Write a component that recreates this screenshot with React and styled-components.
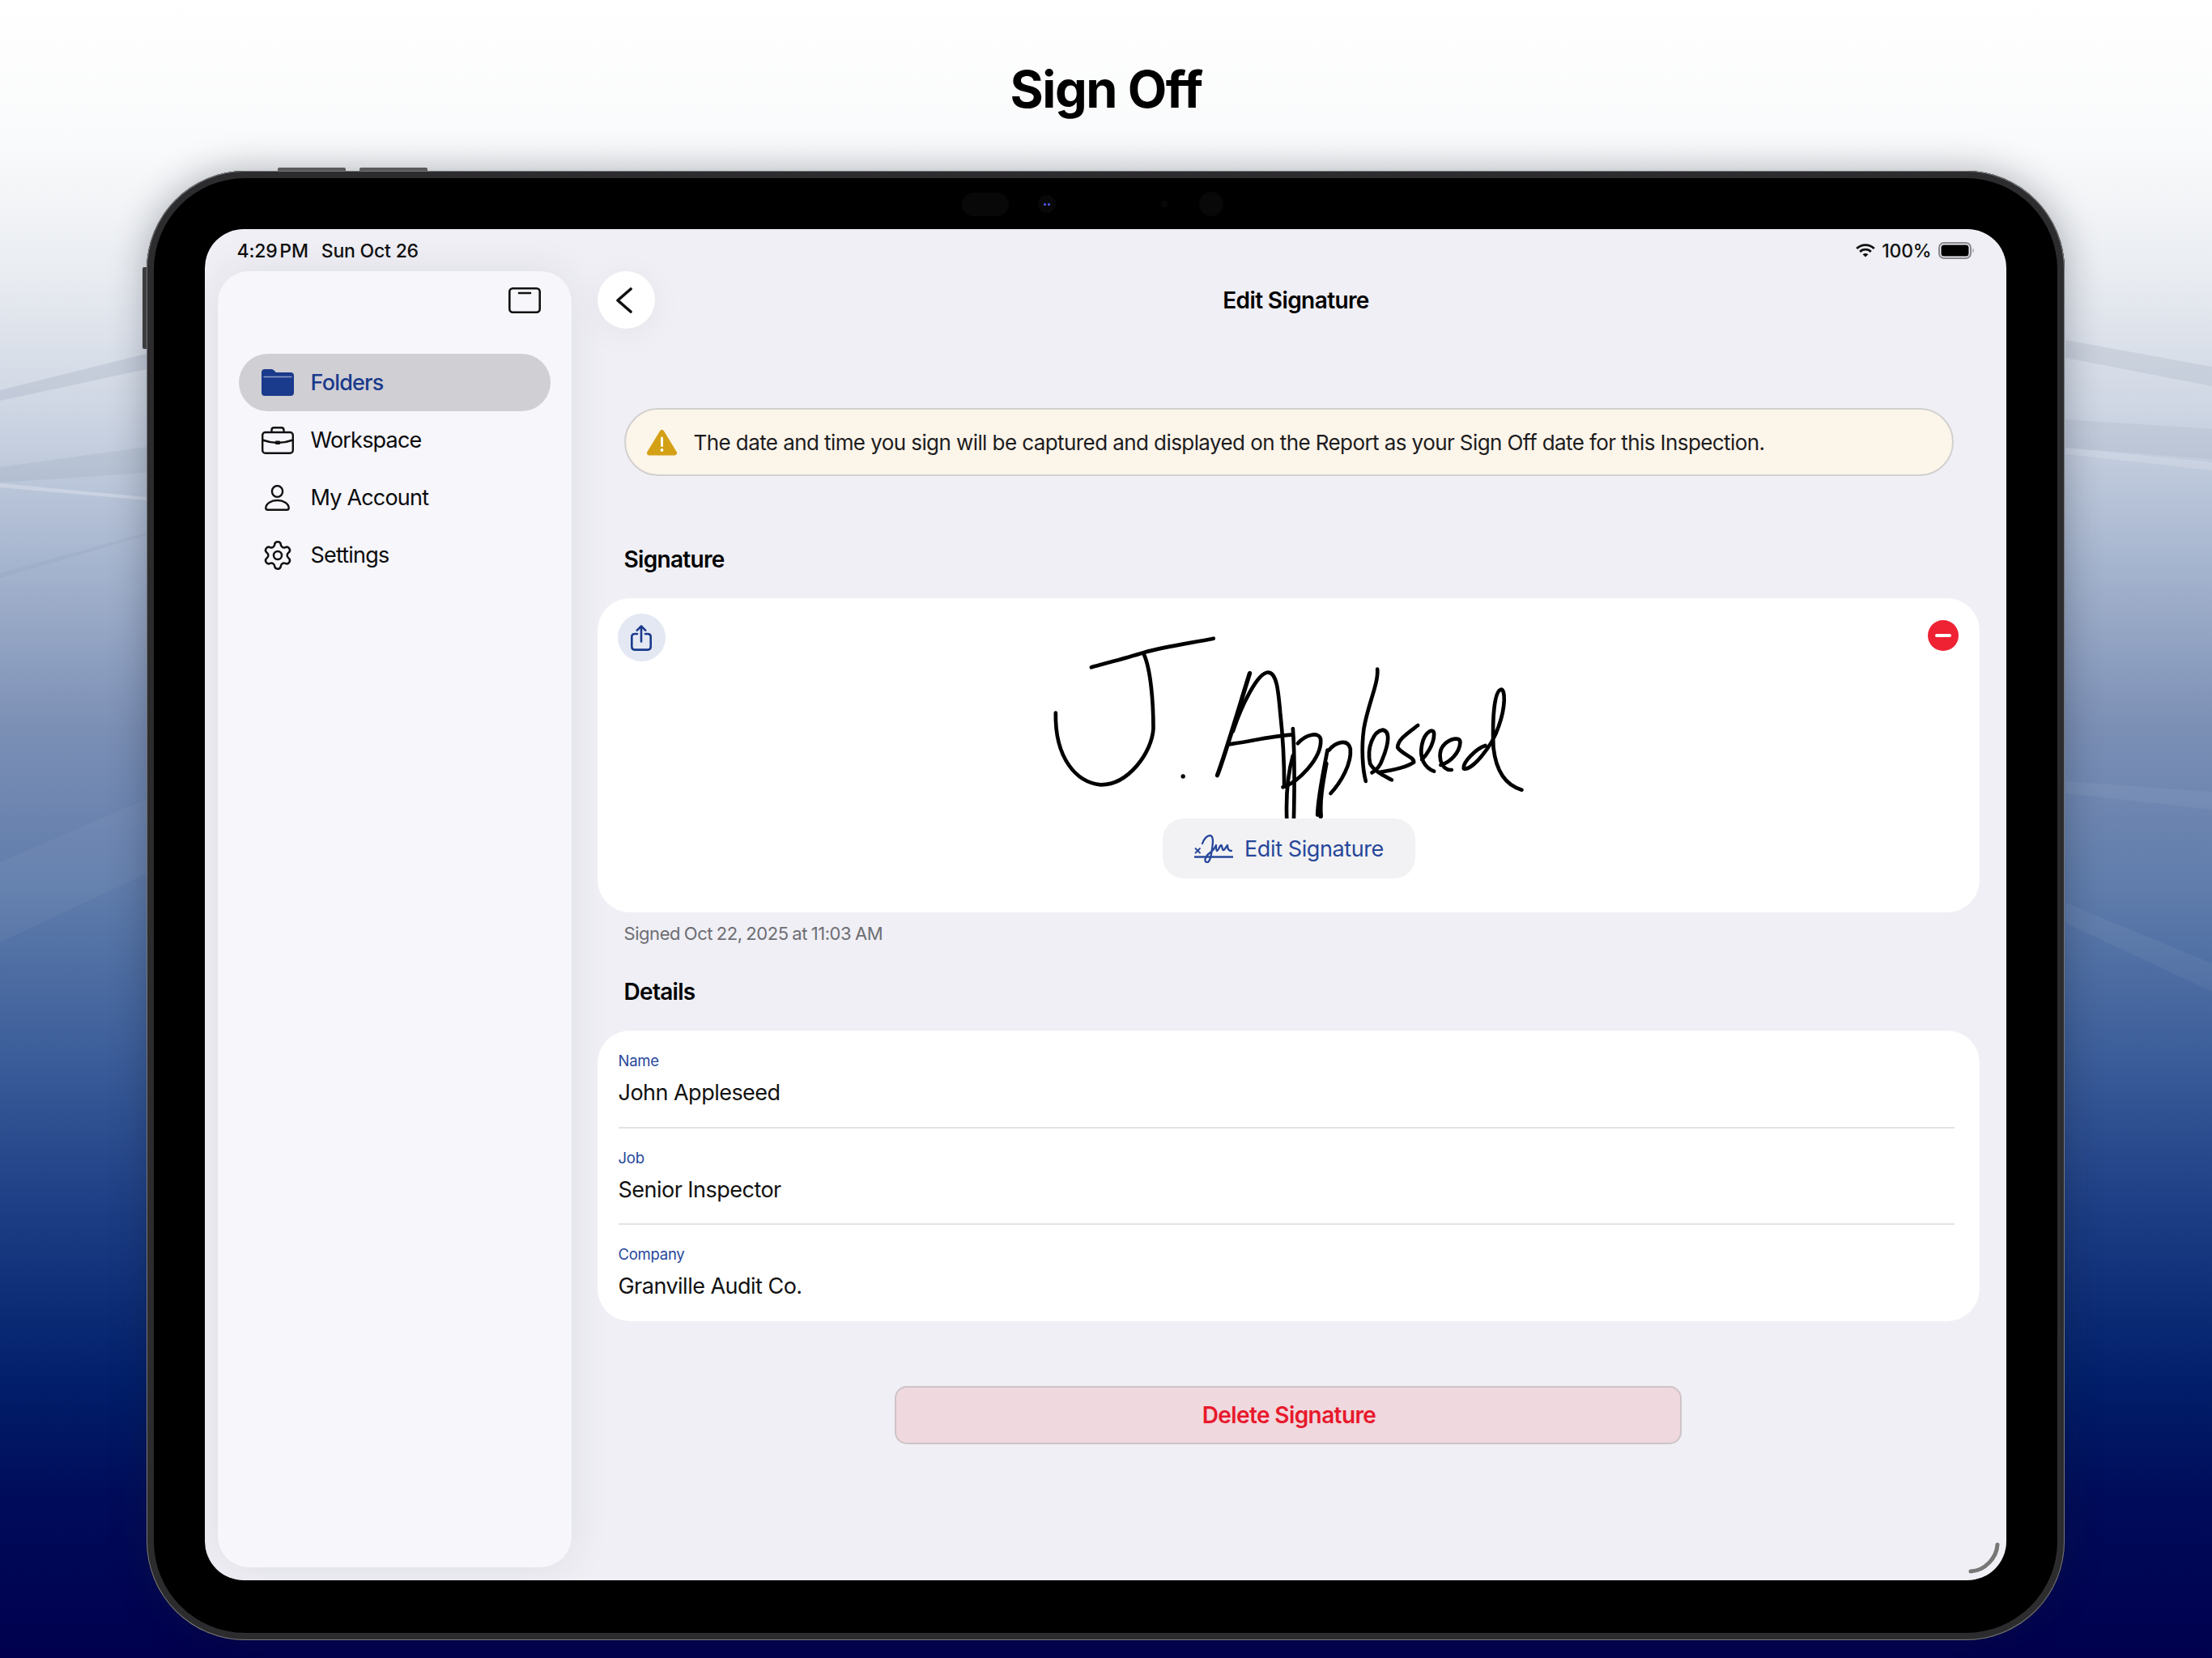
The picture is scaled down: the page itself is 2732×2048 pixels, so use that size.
import styled, { createGlobalStyle } from 'styled-components';
import { Settings } from 'lucide-react';

const navy = '#1a3a8c';

const GlobalStyle = createGlobalStyle`
  html, body {
    margin: 0;
    padding: 0;
    background: #fff;
    font-family: Inter, 'Noto Sans', sans-serif;
    color: #000;
  }
  * { box-sizing: border-box; }
`;

const Page = styled.div`
  position: relative;
  width: 2732px;
  height: 2048px;
  overflow: hidden;
  display: flex;
  flex-direction: column;
  align-items: center;
  background: linear-gradient(
    180deg,
    #ffffff 0,
    #f9fafb 180px,
    #e9ecf1 340px,
    #cfd7e4 500px,
    #a5b4ce 700px,
    #7b8fb5 900px,
    #5f7cab 1100px,
    #3c5e9a 1300px,
    #1c3d84 1500px,
    #02206c 1700px,
    #000c5a 1850px,
    #00004e 2048px
  );
`;

const Backdrop = styled.svg`
  position: absolute;
  inset: 0;
`;

const PageTitle = styled.h1`
  position: relative;
  margin: 75px 0 66px;
  font-size: 63px;
  line-height: 70px;
  font-weight: 700;
  letter-spacing: -1.4px;
`;

const Device = styled.div`
  position: relative;
  width: 2369px;
  height: 1815px;
  margin-right: 2px;
  padding: 72px 72px 74px;
  border-radius: 122px;
  background: #000;
  box-shadow:
    inset 0 0 0 1px #77777a,
    inset 0 0 0 9px #2c2c2e,
    0 0 46px rgba(20, 25, 40, 0.32);
`;

const HardwareKey = styled.div`
  position: absolute;
  background: ${(p) => (p.$side ? '#3d3d3f' : '#5a5a5c')};
  ${(p) => (p.$side
    ? 'left: -5px; top: 119px; width: 5px; height: 101px; border-radius: 2px 0 0 2px;'
    : `top: -4px; left: ${p.$left}px; width: 84px; height: 4px; border-radius: 2px 2px 0 0;`)}
`;

const CameraBar = styled.div`
  position: absolute;
  top: 26px;
  left: 0;
  right: 0;
  height: 30px;
  display: flex;
  align-items: center;
  padding-left: 1007px;
`;

const Sensor = styled.div`
  flex: none;
  width: ${(p) => p.$w}px;
  height: ${(p) => p.$h}px;
  margin-right: ${(p) => p.$gap || 0}px;
  border-radius: 15px;
  background: #080809;
  display: flex;
  align-items: center;
  justify-content: center;
  gap: 2px;
`;

const Lens = styled.span`
  width: 3px;
  height: 3px;
  border-radius: 50%;
  background: #5a5cff;
`;

const Screen = styled.div`
  position: relative;
  width: 2225px;
  height: 1669px;
  border-radius: 48px;
  overflow: hidden;
  background: #efeff5;
  display: flex;
  flex-direction: column;
`;

const StatusBar = styled.div`
  flex: none;
  height: 52px;
  padding: 1px 39px 0 40px;
  display: flex;
  align-items: center;
  justify-content: space-between;
  font-size: 23px;
  font-weight: 500;
  letter-spacing: -0.2px;
  color: #111;
`;

const StatusLeft = styled.div`
  display: flex;
  gap: 16px;
`;

const StatusTime = styled.span`
  word-spacing: -3px;
`;

const StatusRight = styled.div`
  display: flex;
  align-items: center;
  gap: 8px;
`;

const Body = styled.div`
  flex: 1;
  display: flex;
  min-height: 0;
  padding: 0 33px 16px 16px;
  gap: 32px;
`;

const Sidebar = styled.aside`
  flex: none;
  width: 437px;
  padding: 20px 26px 0;
  border-radius: 38px;
  background: #f6f6fb;
  box-shadow: 0 0 50px rgba(40, 40, 60, 0.09);
`;

const SidebarTop = styled.div`
  height: 82px;
  display: flex;
  justify-content: flex-end;
  padding-right: 12px;
  align-items: flex-start;
`;

const NavList = styled.nav`
  display: flex;
  flex-direction: column;
`;

const NavRow = styled.div`
  height: 71px;
  display: flex;
  align-items: center;
  gap: 21px;
  padding-left: 28px;
  border-radius: 36px;
  font-size: 27px;
  letter-spacing: -0.8px;
  color: ${(p) => (p.$active ? navy : '#0b0b0d')};
  background: ${(p) => (p.$active ? '#d0cfd4' : 'transparent')};
  font-weight: ${(p) => (p.$active ? 500 : 400)};
`;

const NavIcon = styled.span`
  flex: none;
  width: 40px;
  height: 40px;
  display: flex;
  align-items: center;
  justify-content: center;
`;

const Main = styled.main`
  flex: 1;
  min-width: 0;
  display: flex;
  flex-direction: column;
`;

const Header = styled.header`
  flex: none;
  height: 71px;
  display: flex;
  align-items: center;
`;

const BackButton = styled.div`
  flex: none;
  width: 71px;
  height: 71px;
  padding-right: 4px;
  border-radius: 50%;
  background: #fff;
  display: flex;
  align-items: center;
  justify-content: center;
  box-shadow: 0 6px 40px rgba(0, 0, 0, 0.05);
`;

const HeaderTitle = styled.div`
  flex: 1;
  text-align: center;
  padding-right: 52px;
  font-size: 28px;
  font-weight: 600;
  letter-spacing: -0.6px;
`;

const Banner = styled.div`
  flex: none;
  width: 1642px;
  height: 84px;
  margin: 98px 0 0 33px;
  padding-left: 26px;
  display: flex;
  align-items: center;
  gap: 21px;
  border: 2px solid #d2d0cf;
  border-radius: 42px;
  background: #fcf5ea;
  font-size: 26px;
  letter-spacing: -0.58px;
  color: #1c1c1e;
`;

const SectionTitle = styled.h2`
  margin: ${(p) => p.$top}px 0 31px 33px;
  font-size: 28px;
  line-height: 34px;
  font-weight: 600;
  letter-spacing: -0.7px;
`;

const SignatureCard = styled.section`
  position: relative;
  flex: none;
  height: 388px;
  border-radius: 40px;
  background: #fff;
  display: flex;
  flex-direction: column;
  align-items: center;
`;

const SignatureClip = styled.div`
  flex: none;
  height: 272px;
  overflow: hidden;
`;

const ShareButton = styled.div`
  position: absolute;
  top: 19px;
  left: 25px;
  width: 59px;
  height: 59px;
  border-radius: 50%;
  background: #e3e8f3;
  display: flex;
  align-items: center;
  justify-content: center;
`;

const RemoveButton = styled.div`
  position: absolute;
  top: 27px;
  right: 26px;
  width: 38px;
  height: 38px;
  border-radius: 50%;
  background: #ee2233;
  display: flex;
  align-items: center;
  justify-content: center;
`;

const MinusBar = styled.span`
  width: 20px;
  height: 4px;
  border-radius: 2px;
  background: #fff;
`;

const EditButton = styled.div`
  flex: none;
  width: 312px;
  height: 74px;
  margin-left: 2px;
  border-radius: 26px;
  background: #f2f2f4;
  display: flex;
  align-items: center;
  justify-content: center;
  gap: 14px;
  font-size: 27px;
  letter-spacing: -0.4px;
  color: #27479b;
`;

const Caption = styled.div`
  margin: 13px 0 0 33px;
  font-size: 22px;
  line-height: 26px;
  letter-spacing: -0.45px;
  word-spacing: -1px;
  color: #6d6d72;
`;

const DetailsCard = styled.section`
  flex: none;
  height: 359px;
  padding-top: 1px;
  border-radius: 40px;
  background: #fff;
`;

const DetailRow = styled.div`
  height: 119.5px;
  margin: 0 31px 0 26px;
  padding-top: 24px;
  border-bottom: ${(p) => (p.$last ? 'none' : '2px solid #e3e3e6')};
`;

const DetailLabel = styled.div`
  font-size: 18.5px;
  line-height: 24px;
  letter-spacing: -0.25px;
  color: #27479b;
`;

const DetailValue = styled.div`
  margin-top: 10px;
  font-size: 27px;
  line-height: 36px;
  letter-spacing: -0.52px;
  color: #111;
`;

const DeleteButton = styled.div`
  flex: none;
  align-self: center;
  width: 972px;
  height: 72px;
  margin-top: 80px;
  padding-left: 2px;
  border: 2px solid #cdc4c8;
  border-radius: 15px;
  background: #efd8de;
  display: flex;
  align-items: center;
  justify-content: center;
  font-size: 28px;
  font-weight: 600;
  letter-spacing: -0.6px;
  color: #e8192c;
`;

const HomeArc = styled.svg`
  position: absolute;
  right: 6px;
  bottom: 6px;
`;

function BackdropStreaks() {
  return (
    <Backdrop width="2732" height="2048" viewBox="0 0 2732 2048">
      <path d="M0 482 L181 437 V456 L0 495 Z" fill="#aab4c4" opacity="0.38" />
      <path d="M0 577 L181 552 V584 L0 596 Z" fill="#a3afc0" opacity="0.3" />
      <path d="M0 597 L181 614 V618 L0 602 Z" fill="#fff" opacity="0.25" />
      <path d="M0 708 L181 658 V661 L0 714 Z" fill="#7f8fae" opacity="0.12" />
      <path d="M0 1065 L181 987 V1079 L0 1164 Z" fill="#fff" opacity="0.04" />
      <path d="M2551 420 L2732 453 V477 L2551 442 Z" fill="#aab4c4" opacity="0.3" />
      <path d="M2551 518 L2732 530 V567 L2551 553 Z" fill="#a3afc0" opacity="0.22" />
      <path d="M2551 553 L2732 571 V581 L2551 561 Z" fill="#fff" opacity="0.16" />
      <path d="M2551 965 L2732 978 V1000 L2551 980 Z" fill="#fff" opacity="0.05" />
      <path d="M2551 1115 L2732 1190 V1225 L2551 1140 Z" fill="#fff" opacity="0.05" />
    </Backdrop>
  );
}

function SidebarToggleIcon() {
  return (
    <svg width="40" height="32" viewBox="0 0 40 32" fill="none" stroke="#111" strokeWidth="2.6">
      <rect x="1.3" y="1.3" width="37.4" height="29.4" rx="4" />
      <path d="M13 7 H27" strokeLinecap="round" />
    </svg>
  );
}

function FolderIcon() {
  return (
    <svg width="40" height="33" viewBox="0 0 40 33">
      <path d="M0 4 C0 1.5 1.5 0 4 0 H12 C14 0 15 1 16.5 2.5 L18 4 H36 C38.5 4 40 5.5 40 8 V29 C40 31.5 38.5 33 36 33 H4 C1.5 33 0 31.5 0 29 Z" fill={navy} />
      <path d="M2.5 9.5 H37.5" stroke="#8f9fc8" strokeWidth="1.6" />
    </svg>
  );
}

function BriefcaseIcon() {
  return (
    <svg width="40" height="34" viewBox="0 0 40 34" fill="none" stroke="#111" strokeWidth="2.4">
      <rect x="1.2" y="7" width="37.6" height="25.8" rx="3.5" />
      <path d="M12.5 7 V4 C12.5 2 13.7 1.2 15.5 1.2 H24.5 C26.3 1.2 27.5 2 27.5 4 V7" />
      <path d="M1.2 16.5 C8 19 14 20 20 20 C26 20 32 19 38.8 16.5" />
      <rect x="17" y="17.5" width="6" height="4.5" rx="1" fill="#111" stroke="none" />
    </svg>
  );
}

function PersonIcon() {
  return (
    <svg width="31" height="32" viewBox="0 0 31 32" fill="none" stroke="#111" strokeWidth="2.4">
      <ellipse cx="15.5" cy="8" rx="6.6" ry="6.9" />
      <path d="M15.5 19 C8 19 1.3 23 1.3 28.5 C1.3 30 2.2 30.8 3.8 30.8 H27.2 C28.8 30.8 29.7 30 29.7 28.5 C29.7 23 23 19 15.5 19 Z" />
    </svg>
  );
}

function WarningIcon() {
  return (
    <svg width="37" height="33" viewBox="0 0 37 33">
      <path d="M18.5 4 L34 29.5 H3 Z" fill="#d4a015" stroke="#d4a015" strokeWidth="6" strokeLinejoin="round" />
      <rect x="17" y="9.5" width="3" height="12.5" rx="1.5" fill="#fff" />
      <circle cx="18.5" cy="26" r="1.9" fill="#fff" />
    </svg>
  );
}

function ShareIcon() {
  return (
    <svg width="26" height="32" viewBox="0 0 26 32" fill="none" stroke={navy} strokeWidth="2.6" strokeLinecap="round" strokeLinejoin="round">
      <path d="M8 11 H5 C2.6 11 1.3 12.3 1.3 14.6 V26.8 C1.3 29.2 2.6 30.6 5 30.6 H21 C23.4 30.6 24.7 29.2 24.7 26.8 V14.6 C24.7 12.3 23.4 11 21 11 H18" />
      <path d="M13 20.5 V1.6 M7.8 6.6 L13 1.4 L18.2 6.6" />
    </svg>
  );
}

function SignatureIcon() {
  return (
    <svg width="48" height="35" viewBox="0 0 48 35" fill="none" stroke="#27479b" strokeWidth="2.3" strokeLinecap="round" strokeLinejoin="round">
      <path d="M0.5 27.5 H47.5" strokeWidth="2.4" />
      <path d="M1.5 17 L7 22.5 M7 17 L1.5 22.5" strokeWidth="1.8" />
      <path d="M10 11 C12 5 16 0.8 20 1 C25 3 22.5 14 21 24 C20 32 17 35 15 34 C11 32 15 25 21 21 C24 19 26 15 27 13 C27 17 27 20 28 20 C30 20 31 14 33 13 C35 13 34 19 36 19 C38 19 39 15 41 13 C41 16 42 20 46 20" />
    </svg>
  );
}

function WifiIcon() {
  return (
    <svg width="24" height="17" viewBox="0 0 24 17" fill="none" stroke="#111" strokeWidth="2.8">
      <path d="M1.2 6 A15.5 15.5 0 0 1 22.8 6" />
      <path d="M5.2 10 A9.6 9.6 0 0 1 18.8 10" />
      <path d="M12 16.6 L8.6 13.3 A4.8 4.8 0 0 1 15.4 13.3 Z" fill="#111" stroke="none" />
    </svg>
  );
}

function BatteryIcon() {
  return (
    <svg width="45" height="21" viewBox="0 0 45 21">
      <rect x="1" y="1" width="39" height="19" rx="6" fill="none" stroke="#88888d" strokeWidth="2" />
      <rect x="3.5" y="3.5" width="34" height="14" rx="3.5" fill="#000" />
      <path d="M42.5 7.5 C44 8.5 44 12.5 42.5 13.5 Z" fill="#88888d" />
    </svg>
  );
}

// the pen strokes are traced at 3x, hence the scale on each group
function SignatureDrawing() {
  return (
    <svg width="780" height="272" viewBox="1201.5 739 780 272" fill="none" stroke="#000" strokeLinecap="round" strokeLinejoin="round">
      <g transform="translate(1280 770) scale(0.3333)" strokeWidth="14">
        <path d="M205 163 C250 150 330 130 400 108 C480 85 580 72 658 56" />
        <path d="M400 115 C425 170 435 290 435 390 C430 480 340 600 240 598 C150 590 70 500 73 332" />
        <circle cx="545" cy="567" r="8" fill="#000" stroke="none" />
      </g>
      <g transform="translate(1490 810) scale(0.3333)" strokeWidth="14">
        <path d="M42 443 C70 370 120 200 162 65" strokeWidth="16" />
        <path d="M100 280 C130 190 190 62 230 62 C262 62 268 130 275 210 C285 300 290 400 290 485" />
        <path d="M85 328 C150 320 240 298 318 293" />
        <path d="M322 270 C328 350 328 500 325 620" />
        <path d="M300 620 C295 520 305 430 322 370" />
        <path d="M285 487 C340 470 430 380 425 310 C420 280 370 290 340 325" />
        <path d="M450 350 C435 430 415 520 413 590" />
        <path d="M445 400 C430 480 420 540 425 595" strokeWidth="17" />
        <path d="M462 510 C500 470 540 400 535 345 C525 305 480 320 455 350" />
      </g>
      <g transform="translate(1660 810) scale(0.3333)" strokeWidth="14">
        <path d="M125 50 C130 100 90 180 75 270 C65 340 70 420 82 465" />
        <path d="M178 460 C150 445 115 430 98 400 C85 340 110 280 145 275 C175 280 165 330 145 380 C135 410 120 425 105 433" />
        <path d="M275 258 C240 285 200 310 200 340 C215 365 262 375 260 395 C230 415 180 425 130 432" />
        <path d="M335 428 C300 415 280 380 290 330 C300 280 335 265 335 290 C335 330 305 370 290 385" />
        <path d="M400 423 C370 425 350 390 360 350 C375 310 430 295 432 320 C430 360 395 395 360 405" />
        <path d="M525 333 C490 345 440 395 445 418 C470 430 550 340 575 260 C600 190 600 125 583 125 C560 130 550 220 555 340 C565 430 600 480 660 497" />
      </g>
    </svg>
  );
}

const details = [
  { label: 'Name', value: 'John Appleseed' },
  { label: 'Job', value: 'Senior Inspector' },
  { label: 'Company', value: 'Granville Audit Co.' },
];

export default function App() {
  return (
    <>
      <GlobalStyle />
      <Page>
        <BackdropStreaks />
        <PageTitle>Sign Off</PageTitle>
        <Device>
          <HardwareKey $left={162} />
          <HardwareKey $left={263} />
          <HardwareKey $side />
          <CameraBar>
            <Sensor $w={58} $h={29} $gap={36} />
            <Sensor $w={22} $h={22} $gap={130}>
              <Lens />
              <Lens />
            </Sensor>
            <Sensor $w={8} $h={8} $gap={39} />
            <Sensor $w={30} $h={30} />
          </CameraBar>
          <Screen>
            <StatusBar>
              <StatusLeft>
                <StatusTime>4:29 PM</StatusTime>
                <span>Sun Oct 26</span>
              </StatusLeft>
              <StatusRight>
                <WifiIcon />
                <span>100%</span>
                <BatteryIcon />
              </StatusRight>
            </StatusBar>
            <Body>
              <Sidebar>
                <SidebarTop>
                  <SidebarToggleIcon />
                </SidebarTop>
                <NavList>
                  <NavRow $active>
                    <NavIcon><FolderIcon /></NavIcon>
                    Folders
                  </NavRow>
                  <NavRow>
                    <NavIcon><BriefcaseIcon /></NavIcon>
                    Workspace
                  </NavRow>
                  <NavRow>
                    <NavIcon><PersonIcon /></NavIcon>
                    My Account
                  </NavRow>
                  <NavRow>
                    <NavIcon><Settings size={42} strokeWidth={1.5} color="#111" /></NavIcon>
                    Settings
                  </NavRow>
                </NavList>
              </Sidebar>
              <Main>
                <Header>
                  <BackButton>
                    <svg width="22" height="32" viewBox="0 0 22 32" fill="none" stroke="#111" strokeWidth="3.6" strokeLinecap="round" strokeLinejoin="round">
                      <path d="M19 2 L3 16 L19 30" />
                    </svg>
                  </BackButton>
                  <HeaderTitle>Edit Signature</HeaderTitle>
                </Header>
                <Banner>
                  <WarningIcon />
                  The date and time you sign will be captured and displayed on the Report as your Sign Off date for this Inspection.
                </Banner>
                <SectionTitle $top={86}>Signature</SectionTitle>
                <SignatureCard>
                  <ShareButton><ShareIcon /></ShareButton>
                  <RemoveButton><MinusBar /></RemoveButton>
                  <SignatureClip><SignatureDrawing /></SignatureClip>
                  <EditButton>
                    <SignatureIcon />
                    Edit Signature
                  </EditButton>
                </SignatureCard>
                <Caption>Signed Oct 22, 2025 at 11:03 AM</Caption>
                <SectionTitle $top={42}>Details</SectionTitle>
                <DetailsCard>
                  {details.map((d, i) => (
                    <DetailRow key={d.label} $last={i === details.length - 1}>
                      <DetailLabel>{d.label}</DetailLabel>
                      <DetailValue>{d.value}</DetailValue>
                    </DetailRow>
                  ))}
                </DetailsCard>
                <DeleteButton>Delete Signature</DeleteButton>
              </Main>
            </Body>
            <HomeArc width="42" height="42" viewBox="0 0 42 42" fill="none" stroke="#777" strokeWidth="5" strokeLinecap="round">
              <path d="M37 4 C36 20 22 36 4 37" />
            </HomeArc>
          </Screen>
        </Device>
      </Page>
    </>
  );
}
